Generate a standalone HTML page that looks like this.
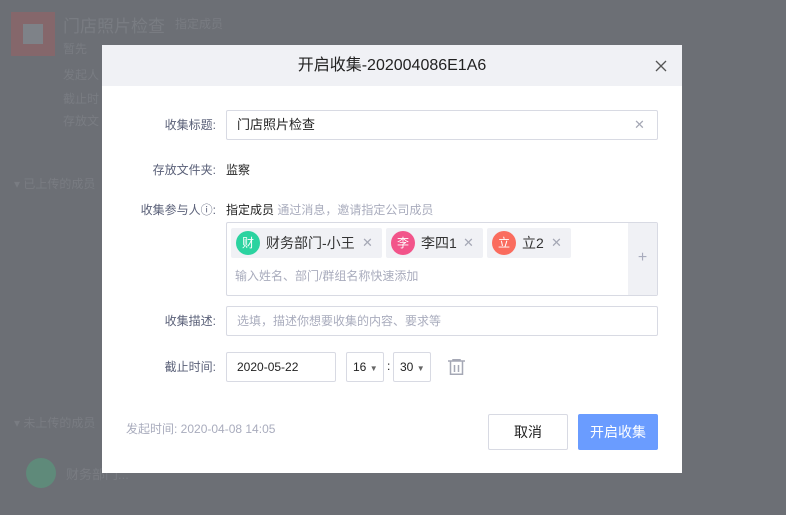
<!DOCTYPE html>
<html><head><meta charset="utf-8"><style>
*{margin:0;padding:0;box-sizing:border-box}
body{width:786px;height:515px;overflow:hidden;position:relative;background:#6c6f75;font-family:"Liberation Sans","Noto Sans CJK SC",sans-serif;font-size:13px;color:#222}
.a{position:absolute;white-space:nowrap}
.bg{color:#797c82}
.modal{position:absolute;left:102px;top:45px;width:580px;height:428px;background:#fff}
.hd{position:absolute;left:0;top:0;width:580px;height:41px;background:#f0f1f5;text-align:center;line-height:41px;font-size:16px;color:#222}
.lbl{position:absolute;right:466px;color:#5a6078;font-size:12px;white-space:nowrap;line-height:16px}
.box{position:absolute;border:1px solid #d8dae3;border-radius:2px;background:#fff}
.tag{position:absolute;top:5px;height:30px;background:#f0f1f5;border-radius:2px;font-size:14px;line-height:30px;color:#333}
.av{position:absolute;left:5px;top:3px;width:24px;height:24px;border-radius:50%;color:#fff;font-size:12px;line-height:24px;text-align:center}
.x{color:#a5a8b5;font-size:13px}
.t{line-height:16px}
</style></head><body>
<div class="a" style="left:11px;top:12px;width:44px;height:44px;background:#85676b"></div>
<div class="a" style="left:23px;top:24px;width:20px;height:20px;background:#7e8288"></div>
<div class="a bg" style="left:63px;top:12px;font-size:17px">门店照片检查</div>
<div class="a bg" style="left:175px;top:15px;font-size:12px">指定成员</div>
<div class="a bg" style="left:63px;top:40px;font-size:12px">暂先</div>
<div class="a bg" style="left:63px;top:66px;font-size:12px">发起人</div>
<div class="a bg" style="left:63px;top:90px;font-size:12px">截止时</div>
<div class="a bg" style="left:63px;top:112px;font-size:12px">存放文</div>
<div class="a bg" style="left:14px;top:175px;font-size:12px">▾ 已上传的成员</div>
<div class="a bg" style="left:14px;top:414px;font-size:12px">▾ 未上传的成员</div>
<div class="a" style="left:26px;top:458px;width:30px;height:30px;border-radius:50%;background:#5f8a7a"></div>
<div class="a bg" style="left:66px;top:464px;font-size:13px">财务部门...</div>
<div class="modal">
<div class="hd">开启收集-202004086E1A6</div>
<svg class="a" style="left:553px;top:15px" width="12" height="12" viewBox="0 0 12 12" stroke="#555" stroke-width="1.3"><path d="M1 1L11 11M11 1L1 11"/></svg>
<div class="lbl" style="top:72px">收集标题:</div>
<div class="box" style="left:124px;top:65px;width:432px;height:30px"></div>
<div class="a t" style="left:135px;top:72px;font-size:13px">门店照片检查</div>
<div class="a x t" style="left:532px;top:72px">✕</div>
<div class="lbl" style="top:117px">存放文件夹:</div>
<div class="a t" style="left:124px;top:117px;font-size:12px">监察</div>
<div class="lbl" style="top:157px">收集参与人ⓘ:</div>
<div class="a t" style="left:124px;top:157px;font-size:12px">指定成员 <span style="color:#a9acbd">通过消息，邀请指定公司成员</span></div>
<div class="box" style="left:124px;top:177px;width:432px;height:74px;overflow:hidden">
 <div class="a" style="right:0;top:0;width:29px;height:74px;background:#f0f1f5;color:#a9acbd;text-align:center;line-height:70px;font-size:16px">+</div>
 <div class="tag" style="left:4px;width:151px"><div class="av" style="background:#2bd3a0">财</div><span style="position:absolute;left:35px">财务部门-小王</span><span class="x" style="position:absolute;left:131px">✕</span></div>
 <div class="tag" style="left:159px;width:97px"><div class="av" style="background:#f2548a">李</div><span style="position:absolute;left:35px">李四1</span><span class="x" style="position:absolute;left:77px">✕</span></div>
 <div class="tag" style="left:260px;width:84px"><div class="av" style="background:#fa6c5e">立</div><span style="position:absolute;left:35px">立2</span><span class="x" style="position:absolute;left:64px">✕</span></div>
 <div class="a t" style="left:8px;top:45px;font-size:12px;color:#a9acbd">输入姓名、部门/群组名称快速添加</div>
</div>
<div class="lbl" style="top:268px">收集描述:</div>
<div class="box" style="left:124px;top:261px;width:432px;height:30px"></div>
<div class="a t" style="left:135px;top:268px;font-size:12px;color:#a9acbd">选填，描述你想要收集的内容、要求等</div>
<div class="lbl" style="top:314px">截止时间:</div>
<div class="box" style="left:124px;top:307px;width:110px;height:30px"></div>
<div class="a t" style="left:135px;top:314px;font-size:12px">2020-05-22</div>
<div class="box" style="left:244px;top:307px;width:38px;height:30px"></div>
<div class="a t" style="left:251px;top:314px;font-size:12px">16 <span style="font-size:8px;color:#666">▼</span></div>
<div class="a t" style="left:285px;top:313px;font-size:12px">:</div>
<div class="box" style="left:291px;top:307px;width:38px;height:30px"></div>
<div class="a t" style="left:298px;top:314px;font-size:12px">30 <span style="font-size:8px;color:#666">▼</span></div>
<svg class="a" style="left:346px;top:314px" width="17" height="16" viewBox="0 0 17 16" fill="none" stroke="#a5a8b5" stroke-width="1.5"><path d="M0 2h17M5 2V0.5h7V2M2.5 2v13.2h12V2M6.5 6v7M10.5 6v7"/></svg>
<div class="a t" style="left:24px;top:376px;font-size:12px;color:#a9acbd">发起时间: 2020-04-08 14:05</div>
<div class="box" style="left:386px;top:369px;width:80px;height:36px;text-align:center;line-height:34px;font-size:14px">取消</div>
<div class="a" style="left:476px;top:369px;width:80px;height:36px;background:#6a9cff;border-radius:2px;color:#fff;text-align:center;line-height:36px;font-size:14px">开启收集</div>
</div>
</body></html>
